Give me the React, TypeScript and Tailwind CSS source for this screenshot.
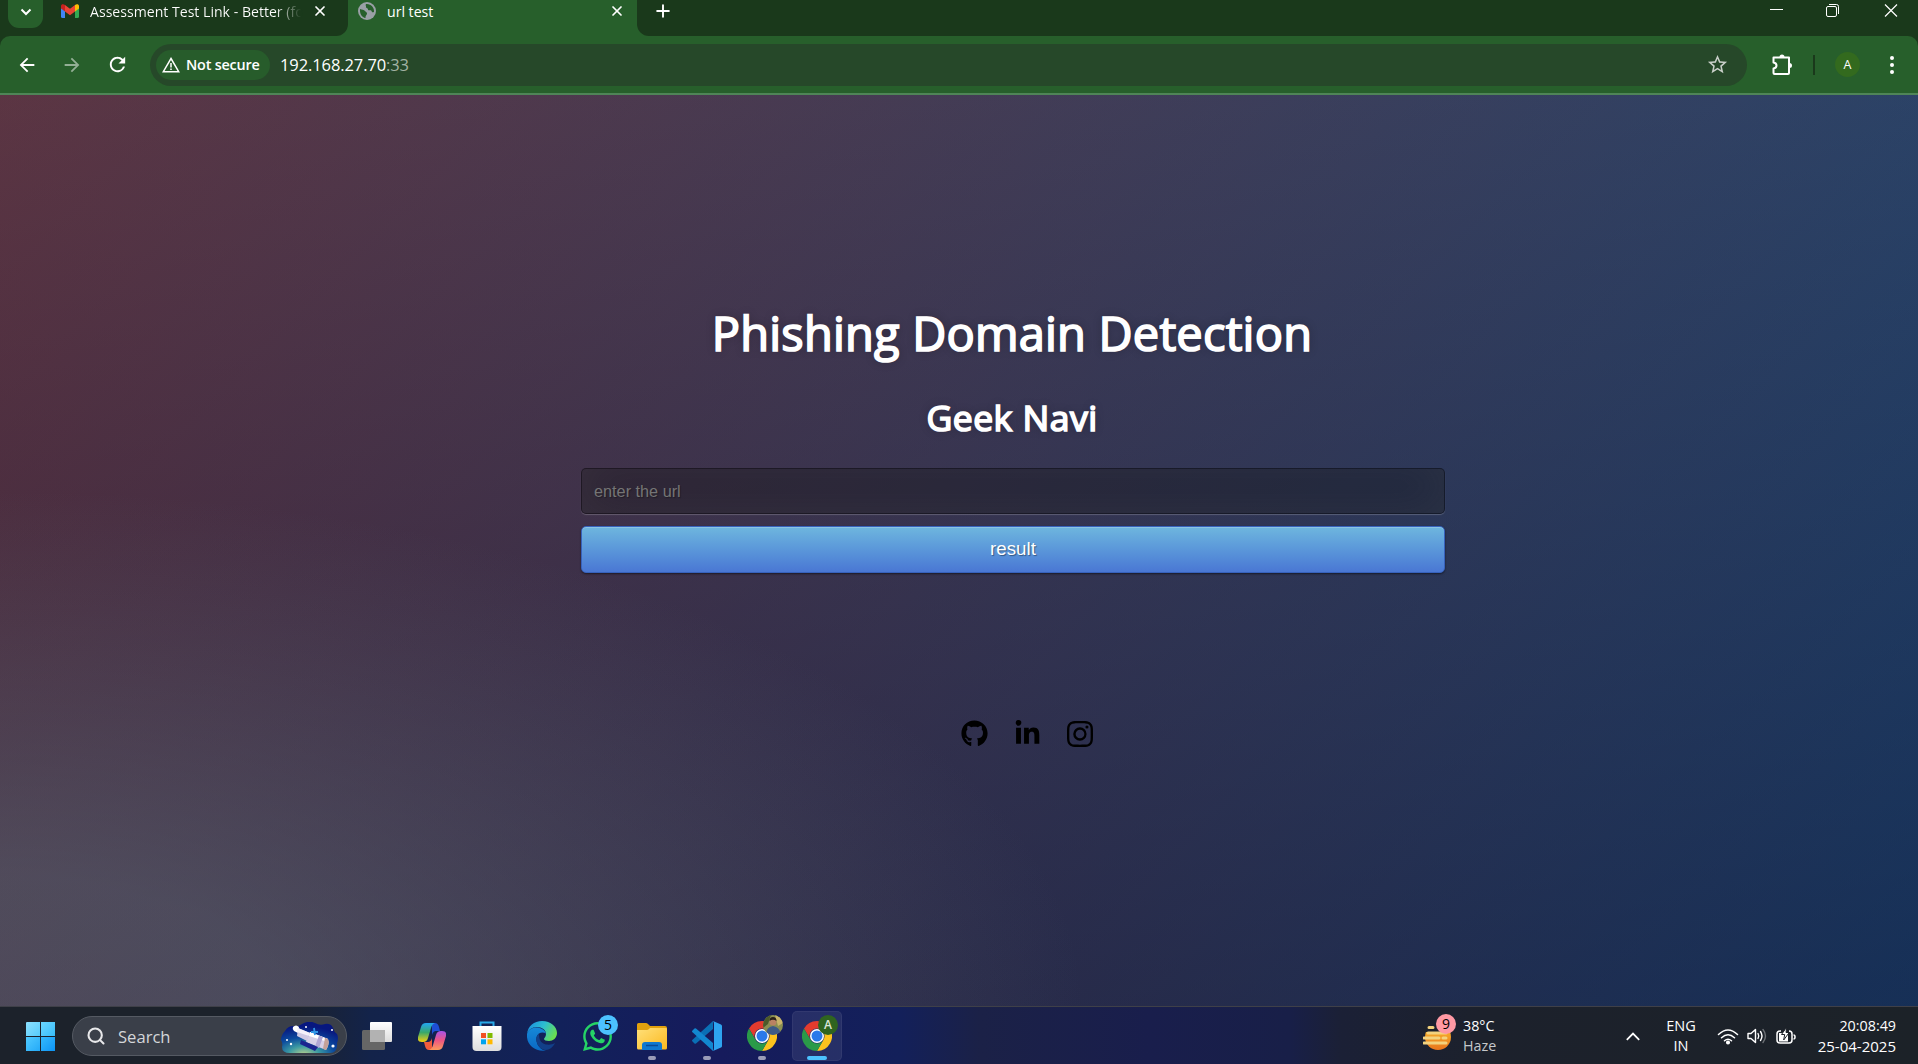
import React from "react";
import { X, Plus, Search } from "lucide-react";
import { FaWhatsapp, FaGithub } from "react-icons/fa";
import { BsInstagram } from "react-icons/bs";
import { FaLinkedinIn } from "react-icons/fa6";
import { MdStarBorder, MdArrowBack, MdArrowForward, MdRefresh } from "react-icons/md";

function TabStrip() {
  return (
    <div className="flex h-9 bg-[#275f2b] text-[14.1px] leading-[18px] text-white">
      <div className="flex w-[348px] items-start rounded-br-[12px] bg-[#1a391b]">
        <div className="ml-2 flex h-7 w-[35px] justify-center rounded-b-[11px] bg-[#275f2b] pt-2">
          <svg width="12" height="8" viewBox="0 0 12 8" fill="none" stroke="#fff" strokeWidth="2"><path d="M1.5 1.5L6 6l4.500-4.500" /></svg>
        </div>
        <svg className="mt-1 ml-[18px]" width="18" height="14" viewBox="0 0 36 28">
          <path d="M0 5v20q0 3 3 3h5V11z" fill="#4285f4" />
          <path d="M36 5v20q0 3-3 3h-5V11z" fill="#34a853" />
          <path d="M28 2v13l8-6V4c0-4-5-5-8-2z" fill="#fbbc04" />
          <path d="M8 2v13L0 9V4c0-4 5-5 8-2z" fill="#c5221f" />
          <path d="M8 2l10 7.500L28 2v13l-10 7.500L8 15z" fill="#ea4335" />
        </svg>
        <div className="mt-[3px] ml-[11px] w-[220px] whitespace-nowrap bg-[linear-gradient(90deg,#fff_84%,#1a391b_96%)] bg-clip-text text-transparent">Assessment Test Link - Better (fo</div>
        <X className="mt-[3px] ml-[2px]" size={16} strokeWidth={2.6} />
      </div>
      <div className="flex w-[289px] items-start">
        <svg className="mt-[2px] ml-[10px]" width="18" height="18" viewBox="0 0 18 18">
          <circle cx="9" cy="9" r="9" fill="#9aa0a6" />
          <path d="M2 7c2 1 4 .5 5 2s2 1 2 2.500S7.500 13 7.500 16C4 15.500 1.600 12 2 7zM8 2c-1 1.500.5 2 0 3S10 6 10 7.500s3 0 3.500 1.500 1 1.500 2.500 1C16.500 5.500 13 1.500 8 2z" fill="#275f2b" />
        </svg>
        <div className="mt-[3px] ml-[11px] flex-1">url test</div>
        <X className="mt-[3px] mr-3" size={16} strokeWidth={2.6} />
      </div>
      <div className="flex flex-1 items-start rounded-bl-[12px] bg-[#1a391b]">
        <Plus className="mt-[1px] ml-[16px]" size={20} strokeWidth={2.300} />
        <div className="flex-1" />
        <svg className="mr-[42px]" width="14" height="20" fill="none" stroke="#fff"><path d="M0 9.500h13" /></svg>
        <svg className="mr-[44px]" width="14" height="20" fill="none" stroke="#fff"><rect x=".5" y="6.500" width="10" height="10" rx="1.500" /><path d="M3 4.500h7.500q2 0 2 2V14" /></svg>
        <svg className="mr-[20px]" width="14" height="20" fill="none" stroke="#fff" strokeWidth="1.200"><path d="M1 4.500l12 12M13 4.500l-12 12" /></svg>
      </div>
    </div>
  );
}

function Toolbar() {
  return (
    <div className="bg-[#1a391b]">
      <div className="flex h-[59px] items-center rounded-t-[10px] border-b-2 border-[#4f8557] bg-[#275f2b] text-white">
        <MdArrowBack className="ml-4" size={22} />
        <MdArrowForward className="ml-[23px] opacity-50" size={22} />
        <MdRefresh className="ml-[23px]" size={23} />
        <div className="ml-[21px] flex h-[42px] w-[1597px] items-center rounded-full bg-[#264829]">
          <div className="ml-1.5 flex h-[30px] w-[114px] items-center rounded-full bg-[#275c2b]">
            <svg className="ml-[6px]" width="18" height="16" viewBox="0 0 18 16" fill="none" stroke="#fff" strokeWidth="1.500"><path d="M9 1.500L16.700 14.700H1.300zM9 6v4.500M9 11.500v1.500" /></svg>
            <span className="ml-[6px] whitespace-nowrap text-[14.4px] font-semibold tracking-[-0.2px]">Not secure</span>
          </div>
          <span className="mt-[2px] ml-[10px] flex-1 text-[16.500px] tracking-[-0.1px]">192.168.27.70<span className="text-[#a3b3a4]">:33</span></span>
          <MdStarBorder className="mr-[18px] text-[#c9cfc9]" size={23} />
        </div>
        <svg className="ml-[23px]" width="24" height="24" viewBox="0 0 24 24" fill="none" stroke="#fff" strokeWidth="2" strokeLinejoin="round">
          <path d="M3.500 4.500h15.500v15.500q0 1-1 1H4.500q-1 0-1-1v-4.500q3-.5 3-3t-3-3z" />
          <path d="M9.500 4a2.500 2.500 0 0 1 5 0zM19.500 10a2.500 2.500 0 0 1 0 5z" fill="#fff" stroke="none" />
        </svg>
        <div className="ml-[19px] h-5 w-[2px] bg-[#1a391b]" />
        <div className="ml-[20px] flex size-[25px] items-center justify-center rounded-full bg-[#336a1e] pt-px text-[12.500px] font-medium">A</div>
        <div className="ml-[30px] flex flex-col gap-[3px]">
          <i className="size-1 rounded-full bg-white" />
          <i className="size-1 rounded-full bg-white" />
          <i className="size-1 rounded-full bg-white" />
        </div>
      </div>
    </div>
  );
}

const heading = "text-center font-normal text-white [-webkit-text-stroke:1.7px_#fff] [text-shadow:0_0_10px_rgba(0,0,0,0.3)]";

function Page() {
  return (
    <main className="flex h-[911px] flex-col items-center bg-[#092756] bg-[radial-gradient(ellipse_farthest-corner_at_0%_100%,rgba(104,128,138,0.4)_10%,rgba(138,114,76,0)_40%),linear-gradient(to_bottom,rgba(57,173,219,0.25)_0%,rgba(42,60,87,0.4)_100%),linear-gradient(135deg,#670d10_0%,#092756_100%)] pl-[108px]">
      <div className="flex w-[864px] flex-col pt-[203px]">
        <h1 className={heading + " pr-[2px] text-[47px] leading-[70px] tracking-[0.2px]"}>Phishing Domain Detection</h1>
        <h2 className={heading + " mt-6 pr-[2px] text-[35.500px] leading-[50px] tracking-[0.500px]"}>Geek Navi</h2>
        <input className="mt-[26px] h-[46px] rounded-[5px] border border-black/30 bg-black/30 px-3 font-['Liberation_Sans',sans-serif] text-[16.25px] text-white shadow-[inset_0_-5px_45px_rgba(100,100,100,0.2),0_1px_1px_rgba(255,255,255,0.2)] outline-none [text-shadow:1px_1px_1px_rgba(0,0,0,0.3)] placeholder:text-[#757575]" placeholder="enter the url" />
        <button className="mt-3 h-[47px] rounded-[5px] border border-[#3762bc] bg-gradient-to-b from-[#6eb6de] to-[#4a77d4] font-['Liberation_Sans',sans-serif] text-[18.75px] text-white shadow-[inset_0_1px_0_rgba(255,255,255,0.2),0_1px_2px_rgba(0,0,0,0.5)] [text-shadow:1px_1px_1px_rgba(0,0,0,0.4)]">result</button>
      </div>
      <div className="mt-[147px] flex items-center gap-[26px] pl-[28px] text-black">
        <FaGithub size={27} />
        <FaLinkedinIn size={27} />
        <BsInstagram size={26} />
      </div>
    </main>
  );
}

function Telescope() {
  return (
    <svg width="58" height="32" viewBox="0 0 58 32">
      <defs>
        <radialGradient id="sky" cx=".4" cy="1.050" r=".9"><stop offset="0" stopColor="#b9d08c" /><stop offset=".3" stopColor="#3b9aa3" /><stop offset=".6" stopColor="#0b4a9e" /><stop offset="1" stopColor="#07177f" /></radialGradient>
      </defs>
      <path d="M4 9q3-5 8-5 5 1 9-2 7-4 13-1 5 3 10 1 6-1 8 4 1 4 4 6 2 4 0 9 1 10-7 10H9q-8 0-8-6 1-4-1-7 0-5 4-9z" fill="url(#sky)" />
      <path d="M12 5q3-3 6 0l-1 6-4-2q-2-2-1-4z" fill="#fff" />
      <path d="M17 6l12 5-3 8-10-5z" fill="#cfc9e4" />
      <path d="M17 6l12 5-1 3-12-4z" fill="#f4f1fa" />
      <path d="M29 10l18 7q2 5-2 11l-20-8z" fill="#d6cfe6" />
      <path d="M29 10l18 7v3l-19-6z" fill="#fff" />
      <path d="M38 13.500l4 1.500-4 11-4-1.500z" fill="#b0a6d4" />
      <path d="M47 17q2 5-2 11l-3-1.200 2-11z" fill="#c3a199" />
      <path d="M20 18l17 7-3 4-15-7z" fill="#1b2390" /><path d="M33 6l1 7M30 10h7" stroke="#3296e6" strokeWidth="1.800" />
      <g fill="#fff"><circle cx="6" cy="18" r="1" /><circle cx="10" cy="22" r="1.200" /><circle cx="25" cy="5" r="1" /><circle cx="51" cy="8" r="1" /><circle cx="52" cy="24" r="1.600" /></g>
    </svg>
  );
}

function TaskView() {
  return (
    <svg width="30" height="28" viewBox="0 0 30 28">
      <defs><linearGradient id="tv" x2="0" y2="1"><stop stopColor="#fff" /><stop offset="1" stopColor="#dcdcdc" /></linearGradient></defs>
      <rect y="8" width="23" height="20" rx="1.500" fill="#666" />
      <rect x="8" width="22" height="20" rx="1" fill="url(#tv)" />
      <path d="M8 8h15v12H8z" fill="#b2b2b2" />
    </svg>
  );
}

function Copilot() {
  return (
    <svg width="28" height="27" viewBox="0 0 28 27">
      <defs>
        <linearGradient id="cp1" x2="0" y2="1"><stop stopColor="#22a6f2" /><stop offset=".5" stopColor="#3aa86a" /><stop offset="1" stopColor="#f7cf0e" /></linearGradient>
        <linearGradient id="cp2" x2="0" y2="1"><stop stopColor="#a653e8" /><stop offset=".5" stopColor="#ee5683" /><stop offset="1" stopColor="#fb9a5a" /></linearGradient>
      </defs>
      <path d="M14 0h3q3 0 4 4l1 4h-4q-3 0-4 4z" fill="#1e4fd6" />
      <path d="M8 0h9q-3 1-4 5l-3 10q-1 4-5 4H4q-5 0-4-5L3 4Q4 0 8 0z" fill="url(#cp1)" />
      <path d="M14 27h-3q-3 0-4-4l-1-4h4q3 0 4-4z" fill="#f05b3c" />
      <path d="M20 27h-9q3-1 4-5l3-10q1-4 5-4h1q5 0 4 5l-3 10q-1 4-5 4z" fill="url(#cp2)" />
    </svg>
  );
}

function Store() {
  return (
    <svg width="30" height="30" viewBox="0 0 30 30">
      <defs><linearGradient id="st" x2="0" y2="1"><stop stopColor="#fff" /><stop offset="1" stopColor="#dedede" /></linearGradient></defs>
      <path d="M8.500 6V1.500h13V6" fill="none" stroke="#29a9e8" strokeWidth="2" />
      <path d="M.5 5h29v21q0 4-4 4h-21q-4 0-4-4z" fill="url(#st)" />
      <path d="M9 12h5v5H9z" fill="#f25022" /><path d="M15.500 12h5v5h-5z" fill="#7fba00" /><path d="M9 18.300h5v5H9z" fill="#00a4ef" /><path d="M15.500 18.300h5v5h-5z" fill="#ffb900" />
    </svg>
  );
}

function Edge() {
  return (
    <svg width="30" height="30" viewBox="0 0 30 30">
      <defs>
        <linearGradient id="eg1" x1="0" y1=".2" x2="1" y2=".6"><stop stopColor="#1b8fe0" /><stop offset=".5" stopColor="#2dbfd0" /><stop offset="1" stopColor="#6be04c" /></linearGradient>
        <linearGradient id="eg2" x2="0" y2="1"><stop stopColor="#1689d8" /><stop offset="1" stopColor="#0a68c4" /></linearGradient>
      </defs>
      <path d="M0 13C1 5 7 0 15 0c9 0 15 6 15 12 0 5-4 8-8 8-3 0-5-1-5-2s2-2 2-5c0-4-4-7-9-7C5 6 1 9 0 13z" fill="url(#eg1)" />
      <path d="M0 13c1-4 5-6.500 9-6.500 5 0 9 2.500 10 6-2-1.500-5-1.500-7 0-4 3-3 9 0 13 2 2.500 4 4 7 4C8 31-1 24 0 13z" fill="url(#eg2)" />
      <path d="M12 12.500c-4 3-3 9 0 13 4 5 12 5 16-3.500-5 3-13 2-15-3-1-2.500-1-5-1-6.500z" fill="#123f88" />
    </svg>
  );
}

function Folder() {
  return (
    <svg width="30" height="27" viewBox="0 0 30 27">
      <defs><linearGradient id="fo" x2="1" y2="1"><stop stopColor="#ffe07a" /><stop offset="1" stopColor="#fcb91f" /></linearGradient></defs>
      <path d="M0 1.500Q0 0 1.500 0H9q1 0 2 1l2 2h15q2 0 2 2v4H0z" fill="#e2a10d" />
      <path d="M0 7h10q1 0 2-1l1-1h16q1 0 1 1v19q0 1.500-1.500 1.500h-27Q0 26.500 0 25z" fill="url(#fo)" />
      <path d="M5 27v-5q0-3 3-3h14q3 0 3 3v5z" fill="#0f78d0" /><path d="M9 22.500h12" stroke="#0a4a96" strokeWidth="1.500" />
    </svg>
  );
}

function VsCode() {
  return (
    <svg width="30" height="30" viewBox="0 0 30 30">
      <path d="M21 0v8L4 22.500q-1 .5-1.500 0L.5 20.500q-1-1 0-1.800z" fill="#0a6fb5" />
      <path d="M21 30v-8L4 7.500Q3 7 2.500 7.500L.5 9.500q-1 1 0 1.800z" fill="#1287d0" />
      <path d="M21 0l8 3.500q1 .5 1 1.500v20q0 1-1 1.500L21 30q1-1 1-3V3q0-2-1-3z" fill="#2ea4f0" />
    </svg>
  );
}

function Chrome() {
  return (
    <svg width="30" height="30" viewBox="-15 -15 30 30">
      <path d="M0-15A15 15 0 0 1 13-7.500H0A7.500 7.500 0 0 0-6.500 3.750L-13-7.500A15 15 0 0 1 0-15z" fill="#e33b2e" />
      <path d="M13-7.500A15 15 0 0 1 0 15L6.500 3.750A7.500 7.500 0 0 0 0-7.500z" fill="#fcc31e" />
      <path d="M0 15A15 15 0 0 1-13-7.500L-6.500 3.750A7.500 7.500 0 0 0 6.500 3.750z" fill="#2a9a48" />
      <circle r="7" fill="#fff" /><circle r="5.500" fill="#2a79ea" />
    </svg>
  );
}

function Cell({ children, badge, dot, active }: { children: React.ReactNode; badge?: React.ReactNode; dot?: boolean; active?: boolean }) {
  return (
    <div className={"relative flex h-[50px] w-[50px] shrink-0 items-center justify-center rounded-[5px] " + (active ? "bg-white/8 ring-1 ring-white/5 ring-inset" : "")}>
      {children}
      {badge}
      {dot && <i className={"absolute bottom-[1px] h-1 rounded-full " + (active ? "w-5 bg-[#4cc2ff]" : "w-2 bg-[#9a9cb8]")} />}
    </div>
  );
}

const badgeBox = "absolute top-[4px] left-[26px] flex size-5 items-center justify-center overflow-hidden rounded-full ";

function Taskbar() {
  return (
    <footer className="flex h-[58px] items-center border-t border-[#3f4048] bg-[linear-gradient(90deg,#1c222b_0,#1c222b_290px,#13234a_370px,#12215a_560px,#161b5c_720px,#13205a_900px,#1b2147_980px,#191e4c_1150px,#181f48_1290px,#1b2036_1340px,#1c212c_1480px,#1c2228_1918px)] pt-px text-[15px] leading-5 text-white">
      <div className="ml-[26px] grid grid-cols-2 gap-px">
        <i className="size-[14px] rounded-tl-[1px] bg-gradient-to-br from-[#8be0ff] to-[#55ccfb]" />
        <i className="size-[14px] bg-gradient-to-br from-[#6ad6ff] to-[#35bdf9]" />
        <i className="size-[14px] bg-gradient-to-br from-[#4fcaff] to-[#22aaf8]" />
        <i className="size-[14px] bg-gradient-to-br from-[#34b9fc] to-[#0a94f5]" />
      </div>
      <div className="ml-[17px] flex h-10 w-[275px] items-center rounded-full border border-[#555a63] bg-[#3a3f49]">
        <Search className="ml-[13px]" size={20} strokeWidth={2.500} color="#e8e8ea" />
        <span className="mt-px ml-[12px] flex-1 text-[16.600px] text-[#d4d6d9]">Search</span>
        <div className="mt-1 mr-[7px]"><Telescope /></div>
      </div>
      <div className="ml-[5px] flex gap-[5px]">
        <Cell><TaskView /></Cell>
        <Cell><Copilot /></Cell>
        <Cell><Store /></Cell>
        <Cell><Edge /></Cell>
        <Cell badge={<b className={badgeBox + "bg-[#4cc2ff] text-[14px] font-normal text-black"}>5</b>}><FaWhatsapp size={33} color="#25d366" /></Cell>
        <Cell dot><Folder /></Cell>
        <Cell dot><VsCode /></Cell>
        <Cell dot badge={
          <b className={badgeBox + "bg-[#8a8f52]"}>
            <svg width="20" height="20" viewBox="0 0 20 20"><path d="M0 0h8l-3 9-5 4z" fill="#4d5a2a" /><path d="M12 0h8v8l-5 3z" fill="#c9b46a" /><path d="M3 20q0-8 7-9 7 1 8 9z" fill="#3d5a86" /><circle cx="10" cy="7" r="3.500" fill="#b98263" /><path d="M6.500 6q0-4 3.500-4t3.500 4q-3.500-2.500-7 0z" fill="#2a2018" /></svg>
          </b>}><Chrome /></Cell>
        <Cell dot active badge={<b className={badgeBox + "bg-[#2f6420] text-[12px] font-semibold text-[#dbe6d8]"}>A</b>}><Chrome /></Cell>
      </div>
      <div className="relative ml-[581px] flex h-[50px] w-10 items-center">
        <svg className="mt-1" width="30" height="25" viewBox="0 0 30 25">
          <defs><linearGradient id="sun" x2="0" y2="1"><stop stopColor="#fcc330" /><stop offset="1" stopColor="#e8741c" /></linearGradient></defs>
          <circle cx="15" cy="11" r="13" fill="url(#sun)" />
          <path d="M0 0h30v6H0z" fill="#1c212c" />
          <path d="M6 1.500h4M5 7h18M1 12h15M20 12h3M1 17h22" stroke="#f3d27e" strokeWidth="3" strokeLinecap="round" />
        </svg>
        <b className="absolute top-[3px] left-[13px] flex size-5 items-center justify-center rounded-full bg-[#ff99a4] text-[14px] font-normal text-black">9</b>
      </div>
      <div className="w-[40px] text-[14.300px]"><div>38°C</div><div className="text-[#c5c8cb]">Haze</div></div>
      <div className="flex-1" />
      <svg className="mr-[26px]" width="14" height="9" viewBox="0 0 14 9" fill="none" stroke="#fff" strokeWidth="1.800"><path d="M.8 7.800L7 1.600l6.200 6.200" /></svg>
      <div className="w-[30px] text-center text-[14.500px]"><div>ENG</div><div>IN</div></div>
      <svg className="ml-[21px]" width="22" height="17" viewBox="0 0 22 17" fill="none" stroke="#fff" strokeWidth="1.500" strokeLinecap="round">
        <path d="M1.500 6.500q9.500-9 19 0M4.500 9.700q6.500-6 13 0M7.500 12.700q3.500-3 7 0" /><circle cx="11" cy="14.500" r="1.300" fill="#fff" />
      </svg>
      <svg className="ml-[8px]" width="20" height="18" viewBox="0 0 20 18" fill="none" stroke="#fff" strokeWidth="1.400" strokeLinecap="round" strokeLinejoin="round">
        <path d="M1 6.500h3l4.500-4v13l-4.500-4H1zM11 6.500q1.500 2.500 0 5M13.500 4.500q3 4.500 0 9" /><path d="M16 2.500q5 6.500 0 13" opacity=".35" />
      </svg>
      <svg className="ml-[9px]" width="20" height="18" viewBox="0 0 20 18" fill="none" stroke="#fff" strokeWidth="1.500">
        <path d="M5 4H4Q1 4 1 7v6q0 3 3 3h9q3 0 3-3V7q0-3-3-3" /><path d="M17.500 8q1.500 0 1.500 2t-1.500 2" />
        <path d="M3 6h9v8.500H3z" fill="#fff" stroke="none" />
        <path d="M10.800 0L5.500 7.500h3.200l-1 5.500 5.500-7.500h-3.200z" fill="#fff" stroke="#1c2128" strokeWidth="1" />
      </svg>
      <div className="mr-[22px] ml-[20px] w-[80px] text-right"><div className="text-[14.300px]">20:08:49</div><div>25-04-2025</div></div>
    </footer>
  );
}

export default function App() {
  return (
    <div className="flex h-[1064px] w-[1918px] flex-col overflow-hidden bg-[#1a391b] font-['Open_Sans','Noto_Sans',sans-serif]">
      <TabStrip />
      <Toolbar />
      <Page />
      <Taskbar />
    </div>
  );
}
